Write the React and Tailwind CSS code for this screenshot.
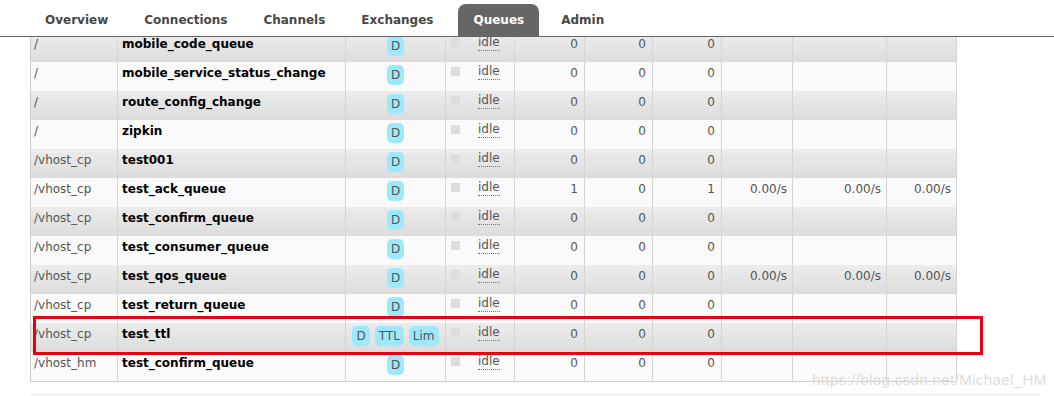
import React from "react";

const tabs = ["Overview", "Connections", "Channels", "Exchanges", "Queues", "Admin"];

const rows = [
  { vhost: "/", name: "mobile_code_queue", f: ["D"], n: [0, 0, 0] },
  { vhost: "/", name: "mobile_service_status_change", f: ["D"], n: [0, 0, 0] },
  { vhost: "/", name: "route_config_change", f: ["D"], n: [0, 0, 0] },
  { vhost: "/", name: "zipkin", f: ["D"], n: [0, 0, 0] },
  { vhost: "/vhost_cp", name: "test001", f: ["D"], n: [0, 0, 0] },
  { vhost: "/vhost_cp", name: "test_ack_queue", f: ["D"], n: [1, 0, 1], rates: true },
  { vhost: "/vhost_cp", name: "test_confirm_queue", f: ["D"], n: [0, 0, 0] },
  { vhost: "/vhost_cp", name: "test_consumer_queue", f: ["D"], n: [0, 0, 0] },
  { vhost: "/vhost_cp", name: "test_qos_queue", f: ["D"], n: [0, 0, 0], rates: true },
  { vhost: "/vhost_cp", name: "test_return_queue", f: ["D"], n: [0, 0, 0] },
  { vhost: "/vhost_cp", name: "test_ttl", f: ["D", "TTL", "Lim"], n: [0, 0, 0] },
  { vhost: "/vhost_hm", name: "test_confirm_queue", f: ["D"], n: [0, 0, 0] },
];

const font = { fontFamily: '"DejaVu Sans", Verdana, sans-serif' };

function Row({ r, i }) {
  const bg =
    i % 2 === 0
      ? "bg-gradient-to-b from-[#ececec] to-[#dcdcdc]"
      : "bg-[#fafafa]";
  const td = "border-r border-[#d4d4d4] align-top px-[4px] pt-[2px]";
  return (
    <tr className={`${bg} h-[29px]`}>
      <td className={`${td} border-l border-l-[#cccccc] pl-[3px] text-[#555]`}>{r.vhost}</td>
      <td className={`${td} font-bold text-black`}>{r.name}</td>
      <td className={`${td} text-center`}>
        <div className="flex justify-center gap-[5px] pt-[1px]">
          {r.f.map((f) => (
            <span
              key={f}
              className="rounded-[5px] bg-[#9ee8fc] px-[4px] h-[20px] leading-[20px] text-[#555] inline-block"
            >
              {f}
            </span>
          ))}
        </div>
      </td>
      <td className={`${td} pl-[5px]`}>
        <div className="flex items-start gap-[18px]">
          <span className="mt-[3px] inline-block h-[9px] w-[9px] bg-[#dddddd]" />
          <span className="border-b border-dotted border-[#777] leading-[15px] text-[#555]">idle</span>
        </div>
      </td>
      {r.n.map((v, k) => (
        <td key={k} className={`${td} text-right pr-[6px] text-[#555]`}>
          {v}
        </td>
      ))}
      {[0, 1, 2].map((k) => (
        <td key={"r" + k} className={`${td} text-right pr-[5px] text-[#555]`}>
          {r.rates ? "0.00/s" : ""}
        </td>
      ))}
    </tr>
  );
}

export default function App() {
  return (
    <div className="relative h-[396px] w-[1054px] overflow-hidden bg-white text-[12px]" style={font}>
      <div className="relative z-10 flex h-[37px] items-end border-b border-[#666] bg-white pl-[27px]">
        {tabs.map((t) => (
          <div
            key={t}
            className={
              t === "Queues"
                ? "ml-[7px] mr-[4px] flex h-[32px] items-center rounded-t-[8px] bg-[#666] px-[15px] text-[12px] font-bold text-white"
                : "flex h-[32px] items-center px-[18px] text-[12px] font-bold text-[#484848]"
            }
          >
            {t}
          </div>
        ))}
      </div>

      <div className="-mt-[4px] pl-[30px]">
        <table className="table-fixed border-collapse" style={{ width: 926 }}>
          <colgroup>
            <col className="w-[87px]" />
            <col className="w-[228px]" />
            <col className="w-[100px]" />
            <col className="w-[69px]" />
            <col className="w-[70px]" />
            <col className="w-[68px]" />
            <col className="w-[69px]" />
            <col className="w-[71px]" />
            <col className="w-[94px]" />
            <col className="w-[70px]" />
          </colgroup>
          <tbody className="border-b border-[#cccccc]">
            {rows.map((r, i) => (
              <Row key={i} r={r} i={i} />
            ))}
          </tbody>
        </table>
        <div className="mt-[11px] h-[6px] w-[1010px] bg-[#f4f4f4]" />
      </div>

      <div className="pointer-events-none absolute left-[33px] top-[316px] h-[39px] w-[950px] border-[3px] border-[#e60012]" />
      <div
        className="pointer-events-none absolute left-[812px] top-[369px] text-[15px] tracking-[0.4px] text-[#dcdcdc]"
        style={{ fontFamily: '"Liberation Sans", Arial, sans-serif' }}
      >
        https://blog.csdn.net/Michael_HM
      </div>
    </div>
  );
}
